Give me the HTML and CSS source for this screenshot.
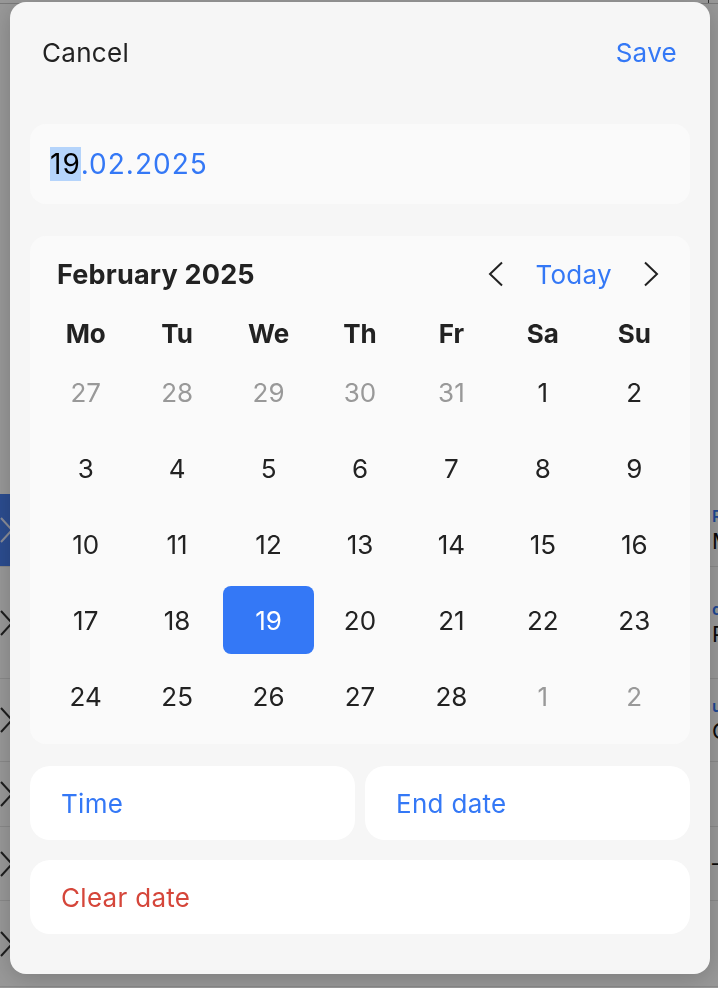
FILE: index.html
```html
<!DOCTYPE html>
<html lang="en">
<head>
  <meta charset="UTF-8" />
  <meta name="viewport" content="width=device-width, initial-scale=1.0"/>
  <title>Pick a date</title>
  <link rel="stylesheet" href="styles.css">
</head>
<body>

  <!-- Page behind the sheet -->
  <div class="page">
    <div class="toolbar">
      <span class="tb-title">Tasks Calendar</span>
      <span class="tb-mark">›</span>
      <span class="tb-line"></span>
      <span class="tb-sort">⇅ Sort</span>
      <span class="tb-link">All Stages</span>
    </div>

    <div class="list">
      <div class="row row-sel h73">
        <div class="row-chev"><svg width="14" height="26" viewBox="0 0 14 26"><polyline points="1,1 12,13 1,25" /></svg></div>
        <div class="row-gap"></div>
        <div class="row-text"><span class="rt-title">Review</span><span class="rt-sub">Marketing plan</span></div>
      </div>
      <div class="row h112">
        <div class="row-chev"><svg width="14" height="26" viewBox="0 0 14 26"><polyline points="1,1 12,13 1,25" /></svg></div>
        <div class="row-gap"></div>
        <div class="row-text"><span class="rt-title">design</span><span class="rt-sub">Product page</span></div>
      </div>
      <div class="row h83">
        <div class="row-chev"><svg width="14" height="26" viewBox="0 0 14 26"><polyline points="1,1 12,13 1,25" /></svg></div>
        <div class="row-gap"></div>
        <div class="row-text"><span class="rt-title">update</span><span class="rt-sub">Onboarding</span></div>
      </div>
      <div class="row h65">
        <div class="row-chev"><svg width="14" height="26" viewBox="0 0 14 26"><polyline points="1,1 12,13 1,25" /></svg></div>
        <div class="row-gap"></div>
        <div class="row-text"></div>
      </div>
      <div class="row h74">
        <div class="row-chev"><svg width="14" height="26" viewBox="0 0 14 26"><polyline points="1,1 12,13 1,25" /></svg></div>
        <div class="row-gap"></div>
        <div class="row-text"><span class="rt-sub">– 3 tasks</span></div>
      </div>
      <div class="row h86">
        <div class="row-chev"><svg width="14" height="26" viewBox="0 0 14 26"><polyline points="1,1 12,13 1,25" /></svg></div>
        <div class="row-gap"></div>
        <div class="row-text"></div>
      </div>
    </div>
  </div>

  <div class="scrim"></div>

  <!-- Date picker sheet -->
  <div class="sheet">
    <div class="sheet-header">
      <span class="btn-cancel">Cancel</span>
      <span class="btn-save">Save</span>
    </div>

    <div class="date-field"><span class="sel">19</span>.02.2025</div>

    <div class="calendar">
      <div class="cal-head">
        <div class="cal-title">February 2025</div>
        <div class="cal-nav">
          <svg class="chev" width="17" height="26" viewBox="0 0 17 26"><polyline points="15,1.5 3,13 15,24.5" /></svg>
          <span class="today">Today</span>
          <svg class="chev" width="17" height="26" viewBox="0 0 17 26"><polyline points="2,1.5 14,13 2,24.5" /></svg>
        </div>
      </div>

      <div class="weekdays">
        <div>Mo</div><div>Tu</div><div>We</div><div>Th</div><div>Fr</div><div>Sa</div><div>Su</div>
      </div>

      <div class="days">
        <div class="day muted">27</div><div class="day muted">28</div><div class="day muted">29</div><div class="day muted">30</div><div class="day muted">31</div><div class="day">1</div><div class="day">2</div>
        <div class="day">3</div><div class="day">4</div><div class="day">5</div><div class="day">6</div><div class="day">7</div><div class="day">8</div><div class="day">9</div>
        <div class="day">10</div><div class="day">11</div><div class="day">12</div><div class="day">13</div><div class="day">14</div><div class="day">15</div><div class="day">16</div>
        <div class="day">17</div><div class="day">18</div><div class="day selected"><span>19</span></div><div class="day">20</div><div class="day">21</div><div class="day">22</div><div class="day">23</div>
        <div class="day">24</div><div class="day">25</div><div class="day">26</div><div class="day">27</div><div class="day">28</div><div class="day muted">1</div><div class="day muted">2</div>
      </div>
    </div>

    <div class="actions">
      <div class="action">Time</div>
      <div class="action">End date</div>
    </div>

    <div class="action action-clear">Clear date</div>
  </div>

</body>
</html>
```

FILE: styles.css
```css
* {
  box-sizing: border-box;
  margin: 0;
  padding: 0;
}

body {
  width: 718px;
  height: 988px;
  overflow: hidden;
  background-color: #fff;
  font-family: 'Inter', 'Noto Sans', sans-serif;
  color: #222;
}

/* Page behind the sheet */
.page {
  width: 718px;
  height: 988px;
  overflow: hidden;
  background-color: #fff;
}

.toolbar {
  display: flex;
  align-items: flex-end;
  height: 4px;
  overflow: hidden;
  font-size: 24px;
  line-height: 22px;
  white-space: nowrap;
  border-bottom: 1px solid #ccc;
}

.toolbar span {
  flex-shrink: 0;
}

.tb-title { margin-left: 40px; color: #111; }
.tb-mark { margin-left: 56px; color: #111; }
.tb-line { width: 1px; height: 22px; background: #555; margin-left: 428px; }
.tb-sort { margin-left: -160px; color: #111; }
.tb-link { margin-left: 30px; color: #3b2bd6; }

.list {
  padding-top: 490px;
}

.row {
  display: grid;
  grid-template-columns: 60px 652px auto;
  border-bottom: 1px solid #e6e6e6;
}

.h73 { height: 73px; }
.h112 { height: 112px; }
.h83 { height: 83px; }
.h65 { height: 65px; }
.h74 { height: 74px; }
.h86 { height: 86px; }

.row-chev {
  display: flex;
  align-items: center;
}

.row-chev svg {
  fill: none;
  stroke: #333;
  stroke-width: 2;
}

.row-sel .row-chev {
  background-color: #4a80f0;
}

.row-sel .row-chev svg {
  stroke: #e6ecff;
}

.row-text {
  display: flex;
  flex-direction: column;
  justify-content: center;
  gap: 4px;
  white-space: nowrap;
  font-size: 22px;
  line-height: 24px;
}

.rt-title { color: #3478f6; font-size: 16px; line-height: 18px; font-weight: 600; }
.rt-sub { color: #111; }

.scrim {
  position: fixed;
  inset: 0;
  background-color: rgba(0, 0, 0, 0.4);
}

/* Sheet */
.sheet {
  position: absolute;
  top: 2px;
  left: 10px;
  width: 700px;
  height: 972px;
  padding: 0 20px;
  background-color: #f6f6f6;
  border-radius: 16px;
  box-shadow: 0 4px 24px rgba(0, 0, 0, 0.2);
}

.sheet-header {
  display: flex;
  justify-content: space-between;
  padding: 33px 13px 0 12px;
  font-size: 26px;
  line-height: 36px;
}

.btn-cancel { color: #222; letter-spacing: 0.3px; }
.btn-save { color: #3478f6; letter-spacing: 0.3px; }

.date-field {
  display: flex;
  align-items: center;
  height: 80px;
  margin-top: 53px;
  padding: 0 20px;
  background-color: #fafafa;
  border-radius: 16px;
  font-size: 28px;
  letter-spacing: 1px;
  color: #3478f6;
}

.date-field .sel {
  background-color: #b5d4fb;
  color: #000;
}

.calendar {
  height: 508px;
  margin-top: 32px;
  padding: 10px;
  background-color: #fafafa;
  border-radius: 16px;
}

.cal-head {
  display: flex;
  align-items: center;
  justify-content: space-between;
  height: 56px;
  padding: 0 20px 0 17px;
}

.cal-title {
  font-size: 27px;
  font-weight: 700;
  letter-spacing: 0.2px;
  color: #222;
}

.cal-nav {
  display: flex;
  align-items: center;
  gap: 31px;
}

.chev {
  fill: none;
  stroke: #222;
  stroke-width: 2;
}

.today {
  font-size: 26px;
  letter-spacing: 0.3px;
  color: #3478f6;
}

.weekdays {
  display: grid;
  grid-template-columns: repeat(7, 1fr);
  height: 40px;
  margin-top: 12px;
  font-size: 26px;
  font-weight: 700;
  line-height: 40px;
  text-align: center;
  color: #222;
}

.days {
  display: grid;
  grid-template-columns: repeat(7, 1fr);
  grid-auto-rows: 76px;
}

.day {
  display: flex;
  align-items: center;
  justify-content: center;
  font-size: 26px;
  color: #222;
}

.day.muted {
  color: #999;
}

.day.selected {
  padding: 4px 0;
}

.day.selected span {
  display: flex;
  align-items: center;
  justify-content: center;
  width: 100%;
  height: 100%;
  background-color: #3478f6;
  border-radius: 8px;
  color: #fff;
}

.actions {
  display: grid;
  grid-template-columns: 1fr 1fr;
  gap: 10px;
  margin-top: 22px;
}

.action {
  display: flex;
  align-items: center;
  height: 74px;
  padding-left: 31px;
  background-color: #fff;
  border-radius: 20px;
  font-size: 26px;
  letter-spacing: 0.3px;
  color: #3478f6;
}

.action-clear {
  margin-top: 20px;
  color: #d5463a;
}
```
